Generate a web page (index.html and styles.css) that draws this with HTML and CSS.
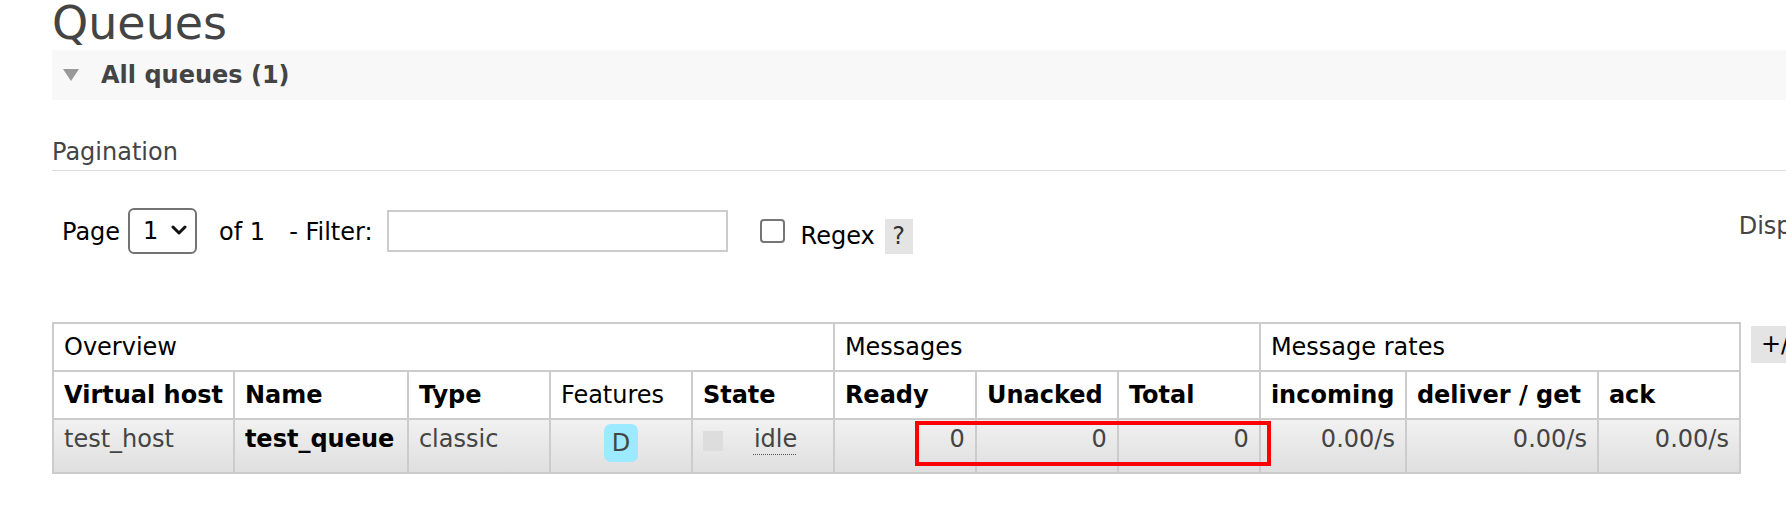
FILE: index.html
```html
<!DOCTYPE html>
<html lang="en">
<head>
<meta charset="utf-8">
<title>Queues</title>
<link rel="stylesheet" href="styles.css">
</head>
<body>
<main class="page">
  <h1 class="title">Queues</h1>
  <section class="section">
    <h2 class="section-head"><span class="toggle"></span>All queues (1)</h2>
    <div class="section-body">
      <h3 class="subhead">Pagination</h3>
      <div class="pager">
        <span class="pager-label">Page</span>
        <span class="select-wrap">
          <select class="page-select"><option>1</option></select>
          <svg class="chevron" width="16" height="10" viewBox="0 0 16 10"><polyline points="2,2 8,8 14,2" fill="none" stroke="#111" stroke-width="3" stroke-linecap="round" stroke-linejoin="round"/></svg>
        </span>
        <span class="pager-of">of 1</span>
        <label class="pager-filter" for="filter">- Filter:</label>
        <input id="filter" class="filter-input" type="text">
        <input id="regex" class="regex-check" type="checkbox">
        <label class="regex-label" for="regex">Regex</label>
        <span class="help">?</span>
        <span class="displaying">Displaying 1 item , page size up to:</span>
      </div>
      <div class="table-row">
        <div class="table-wrap">
          <table class="list">
            <thead>
              <tr>
                <th class="plain" colspan="5">Overview</th>
                <th class="plain" colspan="3">Messages</th>
                <th class="plain" colspan="3">Message rates</th>
              </tr>
              <tr>
                <th class="c-vhost">Virtual host</th>
                <th class="c-name">Name</th>
                <th class="c-std">Type</th>
                <th class="c-std plain">Features</th>
                <th class="c-std">State</th>
                <th class="c-std">Ready</th>
                <th class="c-std">Unacked</th>
                <th class="c-std">Total</th>
                <th class="c-incoming">incoming</th>
                <th class="c-deliver">deliver / get</th>
                <th class="c-std">ack</th>
              </tr>
            </thead>
            <tbody>
              <tr>
                <td>test_host</td>
                <td><a class="queue-link" href="#">test_queue</a></td>
                <td>classic</td>
                <td class="center"><abbr class="badge" title="durable: true">D</abbr></td>
                <td><span class="state-dot"></span><abbr class="state" title="Idle since 2024">idle</abbr></td>
                <td class="num">0</td>
                <td class="num">0</td>
                <td class="num">0</td>
                <td class="num">0.00/s</td>
                <td class="num">0.00/s</td>
                <td class="num">0.00/s</td>
              </tr>
            </tbody>
          </table>
          <div class="highlight"></div>
        </div>
        <span class="columns-toggle">+/-</span>
      </div>
    </div>
  </section>
</main>
</body>
</html>
```

FILE: styles.css
```css
html, body {
  margin: 0;
  padding: 0;
}

body {
  font-family: "DejaVu Sans", Verdana, sans-serif;
  font-size: 24px;
  line-height: 28px;
  color: #444;
  background: #fff;
  overflow: hidden;
}

.page {
  padding-left: 52px;
}

.title {
  margin: 0;
  font-size: 46px;
  line-height: 46px;
  font-weight: normal;
  color: #444;
}

.section-head {
  margin: 4px 0 0;
  height: 50px;
  box-sizing: border-box;
  padding: 11px 0 11px 11px;
  background: #f8f8f8;
  font-size: 24px;
  line-height: 28px;
  font-weight: bold;
  color: #444;
  display: flex;
  align-items: flex-start;
  white-space: nowrap;
}

.toggle {
  flex-shrink: 0;
  width: 0;
  height: 0;
  margin: 8px 22px 0 0;
  border-left: 8.5px solid transparent;
  border-right: 8.5px solid transparent;
  border-top: 12px solid #999;
}

.subhead {
  margin: 38px 0 0;
  padding-bottom: 4px;
  border-bottom: 1px solid #ddd;
  font-size: 24px;
  line-height: 28px;
  font-weight: normal;
  color: #444;
}

.pager {
  display: flex;
  align-items: center;
  height: 46px;
  margin-top: 37px;
  white-space: nowrap;
  color: #000;
}

.pager > * {
  flex-shrink: 0;
}

.pager-label {
  margin: 2px 0 0 10px;
}

.select-wrap {
  position: relative;
  margin-left: 8px;
  width: 69px;
  height: 46px;
}

.page-select {
  display: block;
  appearance: none;
  -webkit-appearance: none;
  box-sizing: border-box;
  width: 69px;
  height: 46px;
  margin: 0;
  padding: 0 0 0 13px;
  border: 2px solid #737373;
  border-radius: 6px;
  background: #fff;
  font: inherit;
  color: #000;
}

.chevron {
  position: absolute;
  left: 43px;
  top: 17px;
  pointer-events: none;
}

.pager-of {
  margin: 2px 0 0 22px;
}

.pager-filter {
  margin: 2px 0 0 24px;
}

.filter-input {
  box-sizing: border-box;
  width: 341px;
  height: 42px;
  margin: 0 0 0 14px;
  padding: 0 8px;
  border: 2px solid #ccc;
  border-radius: 0;
  font: inherit;
  outline: none;
}

.regex-check {
  appearance: none;
  -webkit-appearance: none;
  box-sizing: border-box;
  width: 25px;
  height: 24px;
  margin: 0 0 0 32px;
  border: 2px solid #767676;
  border-radius: 4px;
  background: #fff;
}

.regex-label {
  margin: 10px 0 0 16px;
}

.help {
  box-sizing: border-box;
  width: 28px;
  height: 35px;
  margin: 10px 0 0 10px;
  line-height: 35px;
  text-align: center;
  background: #e4e4e4;
  color: #333;
}

.displaying {
  margin: 0 0 10px 826px;
  color: #444;
}

.table-row {
  display: flex;
  align-items: flex-start;
  margin-top: 68px;
}

.table-wrap {
  position: relative;
  flex-shrink: 0;
}

.list {
  border-collapse: separate;
  border-spacing: 0;
  border-left: 2px solid #ccc;
  border-top: 2px solid #ccc;
}

.list th,
.list td {
  box-sizing: border-box;
  padding: 0 10px;
  border-right: 2px solid #ccc;
  border-bottom: 2px solid #ccc;
  white-space: nowrap;
  text-align: left;
  font-size: 24px;
  line-height: 28px;
}

.list th {
  height: 48px;
  vertical-align: middle;
  font-weight: bold;
  color: #000;
  background: #fff;
}

.list th.plain {
  font-weight: normal;
}

.list td {
  height: 54px;
  padding-top: 5px;
  vertical-align: top;
  color: #444;
  background: linear-gradient(#f1f1f1, #dfdfdf);
}

.c-vhost { width: 180px; padding-right: 6px; }
.c-name { width: 174px; }
.c-std { width: 142px; }
.c-incoming { width: 146px; }
.c-deliver { width: 192px; }

.list td.num {
  text-align: right;
}

.list td.center {
  text-align: center;
}

.queue-link {
  font-weight: bold;
  color: #000;
  text-decoration: none;
}

.badge {
  display: inline-block;
  margin-top: -1px;
  padding: 5px 8px;
  border-radius: 7px;
  background: #9beaff;
  color: #444;
  text-decoration: none;
}

.state-dot {
  display: inline-block;
  width: 20px;
  height: 20px;
  margin-right: 31px;
  vertical-align: -4px;
  background: #ddd;
}

.state {
  text-decoration: underline dotted #555;
  text-decoration-thickness: 1px;
  text-underline-offset: 7px;
}

.highlight {
  position: absolute;
  left: 863px;
  top: 99px;
  width: 356px;
  height: 45px;
  box-sizing: border-box;
  border: 4px solid #f00;
  pointer-events: none;
}

.columns-toggle {
  flex-shrink: 0;
  margin: 4px 0 0 10px;
  padding: 4px 10px 5px;
  background: #e4e4e4;
  color: #000;
  white-space: nowrap;
}
```
